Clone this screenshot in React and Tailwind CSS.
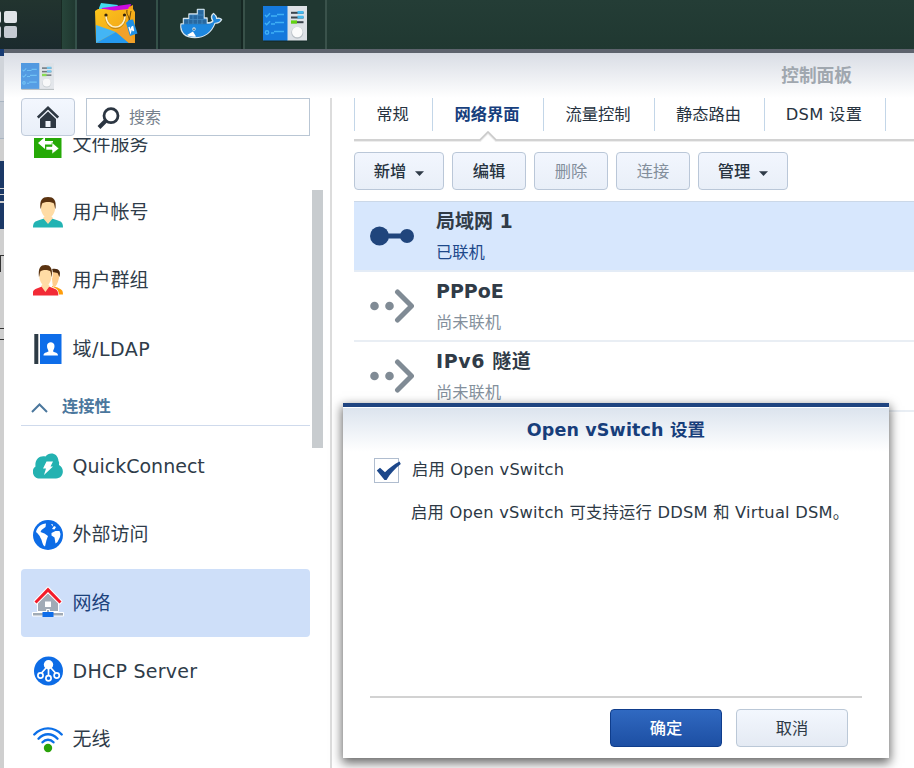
import React from 'react';

function ControlPanelIcon({ className }) {
  return (
    <svg className={className} viewBox="0 0 44 36">
      <rect x="0.5" y="1.5" width="43.5" height="34.5" fill="#0c1f22" opacity=".35" />
      <rect x="0" y="0" width="25" height="34.5" fill="#1579dc" />
      <rect x="24.5" y="0" width="19.5" height="34.5" fill="#dde1e6" />
      <g fill="none" stroke="#3fb0f5" strokeWidth="1.4">
        <path d="M2 9l1.700 1.800L7 7.200M2 17l1.700 1.800L7 15.200" />
        <circle cx="4" cy="26.500" r="1.700" />
        <path d="M8 10h6M14 8.500h7M8 18h4M12 16.500h9M8 27h3M11 25.500h10" strokeWidth="1.600" />
      </g>
      <rect x="28" y="5.800" width="12.500" height="2" fill="#3b444c" />
      <rect x="34.500" y="5" width="6" height="2.800" fill="#42b9f0" />
      <rect x="28" y="10.500" width="12.500" height="2" fill="#3b444c" />
      <rect x="34.500" y="9.700" width="6" height="2.800" fill="#42b9f0" />
      <rect x="28" y="15.200" width="12.500" height="2" fill="#3b444c" />
      <rect x="28" y="14.400" width="6" height="3.200" fill="#62d411" />
      <circle cx="34.300" cy="26.800" r="6" fill="#b9c0c6" />
      <circle cx="34.300" cy="26" r="5.300" fill="#fbfbfb" />
    </svg>
  );
}

function PackageIcon() {
  return (
    <svg className="h-[42px] w-[44px] shrink-0" viewBox="0 0 44 42">
      <defs>
        <linearGradient id="bag" x1="0" y1="0" x2="1" y2="1">
          <stop offset="0" stopColor="#fcc51c" />
          <stop offset="1" stopColor="#f09a17" />
        </linearGradient>
      </defs>
      <path d="M4 5L6 0l17 2-3 6H4z" fill="#41dcee" />
      <path d="M7 5l29-4-2 8H6z" fill="#cb0be0" />
      <path d="M34 4l4-2v6h-6z" fill="#f3a21c" />
      <path d="M0 8l3-2h6l10 1.500L34 6h4l2 3v31H1z" fill="url(#bag)" />
      <path d="M1 22l20 7L1 40z" fill="#43b5f5" />
      <path d="M1 40l20-11 13 11z" fill="#259af0" />
      <path d="M21 29l10-7 9 18h-6z" fill="#f2a12b" />
      <path d="M11 12c0 17 19 17 19 0" fill="none" stroke="#c78912" strokeWidth="2.600" />
      <path d="M11 12c0 16 19 16 19 0" fill="none" stroke="#fff0c4" strokeWidth="1.700" />
      <circle cx="11" cy="12" r="1.600" fill="#33240c" />
      <circle cx="29.500" cy="12" r="1.600" fill="#33240c" />
      <path d="M32 7c-1 6 3 5 2 12M36 8l-2 11" fill="none" stroke="#6b4508" strokeWidth="1" />
      <path d="M31 20l3-3 4-.5 4.500 14L35 33z" fill="#1e90e6" />
      <path d="M34 24l1.500 5 1-4 2 3-1-5" fill="none" stroke="#fff" strokeWidth="1.400" />
    </svg>
  );
}

function DockerIcon() {
  return (
    <svg className="h-[34px] w-[44px] shrink-0" viewBox="0 0 44 34">
      <path
        d="M2 18h2.500v-5.500H10V8h8.500V3.500H25V12h3v5c3 0 5-.7 6-2-2-3-1.500-6 .5-7.500 2 1.500 3 3.300 3 5 2-.6 4-.2 5 1-1.500 2.500-3.500 3.500-6.500 3.500C32 27 26 31.500 16 31.500 6 31.500 1 26.500 2 18z"
        fill="#1977c9"
        stroke="#d5e4ec"
        strokeWidth="1.500"
        strokeLinejoin="round"
      />
      <g fill="#28689f" stroke="#4a93c9" strokeWidth=".4">
        <path d="M5 13.500h4.500V18H5zM9.500 13.500H14V18H9.500zM14 13.500h4.500V18H14zM18.500 13.500H23V18h-4.500zM23 13.500h4.500V18H23zM10.500 9H14v4.500h-3.500zM14 9h4.500v4.500H14zM18.500 9h6v4.500h-6zM19 4h5.500v5H19z" />
      </g>
      <path d="M2.500 18.500H28c4 0 6-1 7-3.500-2-3-1-5.500-.5-6.500 2 1.500 2.500 3.500 2.500 5 2-.6 3.500-.3 4.500.5-1 2-3 2.700-6 2.700C32 26.500 26 31 16 31 7 31 2 26 2.500 18.500z" fill="#1d87de" />
      <path d="M8 29l6-3.500 3 5c-3 .5-7 0-9-1.500z" fill="#fff" />
      <circle cx="15" cy="23" r="1.700" fill="#dce8ef" />
      <circle cx="15" cy="23.200" r=".8" fill="#23475f" />
    </svg>
  );
}

function FileServiceIcon() {
  return (
    <svg className="h-[30px] w-[30px]" viewBox="0 0 30 30">
      <rect x="1" y="1" width="27.500" height="28" fill="#25a906" />
      <path d="M5 14l7-6v4h8v3.500h-8V20z" fill="#fff" />
      <path d="M26 19.500l-7-6v4h-6v3.500h6V25z" fill="#fff" stroke="#25a906" strokeWidth=".6" />
    </svg>
  );
}

function Person({ shirt }) {
  return (
    <g>
      <path d="M0 30.500c0-5 2-6 5-7l6-2h8l6 2c3 1 5 2 5 7z" fill={shirt} />
      <path d="M10 21l5 6 5-6-2-2v-4h-6v4z" fill="#ffdca5" />
      <path d="M8 6c0-4 14-4 14 0v6c0 4-3.500 9-7 9s-7-5-7-9z" fill="#ffdca5" />
      <path d="M7.500 12C6.500 3 9 0 15 0s8.500 3 7.500 12c-1-1-.5-4-2-6-3-1.500-8-1.500-11 0-1.500 2-1 5-2 6z" fill="#5b3310" />
    </g>
  );
}

function UserIcon() {
  return (
    <svg className="h-[31px] w-[30px]" viewBox="0 0 30 31">
      <Person shirt="#22b3b3" />
    </svg>
  );
}

function GroupIcon() {
  return (
    <svg className="h-[31px] w-[30px]" viewBox="0 0 30 31">
      <path d="M20 29.500h10c0-5-2-5-5.500-7L19 21z" fill="#ff9d0a" />
      <path d="M18 5c8-1 9 2 8 8-1 5-3 9-6 10z" fill="#ffcd8c" />
      <path d="M19 4c7-1 9 2 7.500 8-1-1-1-3-2-4l-5-1z" fill="#4d2b10" />
      <g transform="translate(-.5 0) scale(.86 1)">
        <g stroke="#fff" strokeWidth="1.500" paintOrder="stroke">
          <path d="M0 30.500c0-5 2-6 5-7l6-2V12C7 3 9 0 15 0s8.500 3 7.500 12l-3.500 9.500 6 2c3 1 5 2 5 7z" fill="#fff" />
        </g>
        <Person shirt="#f22a36" />
      </g>
    </svg>
  );
}

function DomainIcon() {
  return (
    <svg className="h-[30px] w-[30px]" viewBox="0 0 30 30">
      <rect x="1.300" y="0" width="4" height="30" fill="#2d3b45" />
      <rect x="7" y="0" width="21.500" height="30" fill="#0e6de9" />
      <path d="M14 12c0-5 7.500-5 7.500 0 0 3-1.500 4-1.500 5.500 2 1 5 1 5 4H10.500c0-3 3-3 5-4 0-1.500-1.500-2.500-1.500-5.500z" fill="#fff" />
    </svg>
  );
}

function QuickConnectIcon() {
  return (
    <svg className="h-[26px] w-[30px]" viewBox="0 0 30 26">
      <path d="M7 25.500c-8 0-9-9.500-4.500-12C1.500 6 7 2 12.500 3.500 16-1.500 25-.5 25.500 8c1 1 .5 3 .5 4 6 3 5 13.500-3 13.500z" fill="#24b2b1" />
      <path d="M13.500 8.500H20l-2.500 5h2.500L11 22l2-6.500h-3z" fill="#fff" />
    </svg>
  );
}

function GlobeIcon() {
  return (
    <svg className="h-[30px] w-[30px]" viewBox="0 0 30 30">
      <circle cx="15" cy="15" r="15" fill="#0d6ce6" />
      <path d="M3 12C4 7 8 4 13 3.500l-.5 3.500-4 3-1 2 4 1.500 3.500 2.500-1.500 4-1.500 6.500c-3-1.500-2.500-6-4.500-8.500C6.500 15 5 14 3 12z" fill="#fff" />
      <path d="M18 4l2 .5-.5 2zM21 6l2 1-1.500 2.500L19 9zM18.500 13l4-2h4l1 3-.5 3-2.500 5-2 1.500-1-6-3-2z" fill="#fff" />
    </svg>
  );
}

function NetworkIcon() {
  return (
    <svg className="h-[33px] w-[32px]" viewBox="0 0 32 33">
      <g stroke="#fff" strokeWidth="2" paintOrder="stroke" strokeLinejoin="round">
        <path d="M6 15L16 6l10 9v10H6z" fill="#a1abb6" />
        <path d="M2.500 15.500L16 1.500l13.500 14-2 2L16 6 4.500 17.500z" fill="#f31b29" />
        <path d="M15 24h2v3h14v2.500H1V27h14z" fill="#a1abb6" />
      </g>
      <rect x="10.500" y="26" width="11" height="5" fill="#0e6de9" />
      <rect x="13" y="15.500" width="6" height="5.500" fill="#fff" />
    </svg>
  );
}

function DhcpIcon() {
  return (
    <svg className="h-[30px] w-[30px]" viewBox="0 0 30 30">
      <circle cx="15.500" cy="15" r="14.500" fill="#0d6ce6" />
      <g fill="none" stroke="#fff" strokeWidth="1.700">
        <path d="M15.500 12v7M13 12l-4.500 5M18 12l4.500 5" />
        <circle cx="7.500" cy="19.500" r="2.600" />
        <circle cx="15.500" cy="22.200" r="2.600" />
        <circle cx="23.700" cy="19.500" r="2.600" />
      </g>
      <circle cx="15.500" cy="8.700" r="4.700" fill="#fff" />
    </svg>
  );
}

function WifiIcon() {
  return (
    <svg className="h-[26px] w-[30px]" viewBox="0 0 30 26">
      <g fill="none" stroke="#0b6fe8" strokeWidth="2.400" strokeLinecap="round">
        <path d="M1.300 7.500C9 -.7 21 -.7 28.700 7.500" />
        <path d="M5.500 11.700c5.500-6 13.500-6 19 0" />
        <path d="M9.500 15.300c3.200-3.400 7.800-3.400 11 0" />
      </g>
      <circle cx="15" cy="21" r="4.200" fill="#2aa20a" />
    </svg>
  );
}

function SideItem({ icon, label, active, tracking = '' }) {
  return (
    <div
      className={`flex h-[68.300px] shrink-0 items-center rounded-[4px] pl-[11px] text-[19px] ${
        active ? 'bg-[#cedff9] text-[#1c427c]' : 'text-[#2f3c49]'
      }`}
    >
      <span className="flex w-[32px] shrink-0 items-center justify-center">{icon}</span>
      <span className={`ml-[8.500px] whitespace-nowrap ${tracking}`}>{label}</span>
    </div>
  );
}

function Caret() {
  return (
    <svg className="ml-[9px] mt-[2px] h-[5px] w-[9px]" viewBox="0 0 9 5">
      <path d="M0 .3h9L4.500 5z" fill="#2e3a47" />
    </svg>
  );
}

function ToolButton({ label, width, caret, disabled }) {
  return (
    <button
      className={`flex h-[38px] items-center justify-center rounded-[4px] border-[1.500px] border-[#bac7d8] bg-linear-to-b from-[#f2f6fe] to-[#e9eff8] pt-[2px] text-[16.300px] ${width} ${
        disabled ? 'text-[#828e9b]' : 'font-medium text-[#27333f]'
      }`}
    >
      {label}
      {caret && <Caret />}
    </button>
  );
}

function Tab({ label, width, active }) {
  return (
    <div
      className={`flex h-[33px] shrink-0 items-center justify-center border-l border-[#c3d6e8] pt-[2px] pr-[2px] text-[16.300px] ${width} ${
        active ? 'font-bold text-[#173f7d]' : 'text-[#27333f]'
      }`}
    >
      {label}
    </div>
  );
}

function LinkedIcon() {
  return (
    <svg className="h-[34px] w-[44px]" viewBox="0 0 44 34">
      <circle cx="9.500" cy="17" r="9.500" fill="#20457c" />
      <circle cx="37" cy="17" r="7" fill="#20457c" />
      <rect x="10" y="14.500" width="26" height="5" fill="#20457c" />
    </svg>
  );
}

function UnlinkedIcon() {
  return (
    <svg className="h-[34px] w-[44px]" viewBox="0 0 44 34">
      <circle cx="4.500" cy="17" r="4.300" fill="#808b95" />
      <circle cx="19.500" cy="17" r="4.300" fill="#808b95" />
      <path d="M27.500 3L41.500 17l-14 14" fill="none" stroke="#808b95" strokeWidth="5" strokeLinecap="round" strokeLinejoin="round" />
    </svg>
  );
}

function InterfaceRow({ title, status, linked, tracking = '' }) {
  return (
    <div
      className={`flex h-[70px] items-center border-b-2 pl-[16px] ${
        linked ? 'border-[#e4ecf6] bg-[#d7e7fd]' : 'border-[#e9eef4]'
      }`}
    >
      {linked ? <LinkedIcon /> : <UnlinkedIcon />}
      <div className="ml-[22px] flex flex-col pt-px">
        <span className={`h-[31px] text-[19px] leading-[31px] font-bold text-[#303b47] ${tracking}`}>{title}</span>
        <span className={`h-[31px] text-[16.300px] leading-[31px] ${linked ? 'text-[#1d488a]' : 'text-[#84909c]'}`}>{status}</span>
      </div>
    </div>
  );
}

function Taskbar() {
  return (
    <div className="flex h-[49px] shrink-0 bg-linear-to-b from-[#243d36] to-[#203831]">
      <div className="flex h-full w-[61px] items-center overflow-hidden bg-linear-to-b from-[#22342f] to-[#1b2a2d]">
        <div className="-ml-[12px] grid grid-cols-2 gap-[3px]">
          <span className="h-[12px] w-[13px] rounded-[2px] bg-[#e0e4e8]" />
          <span className="h-[12px] w-[13px] rounded-[2px] bg-[#e0e4e8]" />
          <span className="h-[12px] w-[13px] rounded-[2px] bg-[#c5cad2]" />
          <span className="h-[12px] w-[13px] rounded-[2px] bg-[#c5cad2]" />
        </div>
      </div>
      <div className="w-[14px] border-l border-[#182923] bg-linear-to-r from-[#27453a] to-[#203830]" />
      <div className="flex w-[83px] items-start justify-center border-x-2 border-[#345049] bg-[#1b2a2b] pt-[3px]">
        <PackageIcon />
      </div>
      <div className="flex w-[85px] items-start justify-center border-x-2 border-l-[#17292a] border-r-[#152622] bg-[#203731] pt-[6px]">
        <DockerIcon />
      </div>
      <div className="flex w-[84px] items-start justify-center border-x-2 border-l-[#385149] border-r-[#3a524b] bg-[#203731] pt-[6px]">
        <ControlPanelIcon className="h-[36px] w-[44px]" />
      </div>
    </div>
  );
}

function BackgroundStrip() {
  return (
    <div className="flex w-[4px] shrink-0 flex-col overflow-hidden bg-[#cfcfcf]">
      <div className="h-[7px] bg-[#173b73]" />
      <div className="h-[46px] border-b border-[#a9b5c2] bg-[#d0d4da]" />
      <div className="h-[37px] border-b border-[#a9b5c2] bg-[#c4cad2]" />
      <div className="h-[22px]" />
      <div className="h-[27px] bg-[#1b3866]" />
      <div className="my-px h-[5px] bg-[#1b3866]" />
      <div className="h-[6px] bg-[#1b3866]" />
      <div className="mt-[2px] h-[26px] bg-[#1b3866]" />
      <div className="mt-[26px] h-[17px] border-t border-l border-[#333]" />
      <div className="mt-[56px] h-[12px] border-y border-[#333]" />
    </div>
  );
}

function Sidebar() {
  return (
    <aside className="flex w-[328px] shrink-0 flex-col border-r-2 border-[#dcdcdc] bg-white">
      <div className="flex h-[40px] shrink-0 gap-[11px] pl-[17px]">
        <button className="flex h-[38px] w-[54px] items-center justify-center rounded-[4px] border-[1.500px] border-[#c0cbda] bg-linear-to-b from-[#f3f7fe] to-[#e9eff8]">
          <svg className="h-[22px] w-[22px]" viewBox="0 0 22 22">
            <path d="M.8 11.500L11 1.800l10.200 9.700" fill="none" stroke="#2e3843" strokeWidth="2.600" />
            <path d="M3 13l8-7.500L19 13v9H3z" fill="#2e3843" />
            <path d="M8.500 15h5v6h-5z" fill="#f0f4fb" />
          </svg>
        </button>
        <div className="flex h-[38px] w-[224px] items-center border-[1.500px] border-[#b9c6d4] bg-white pt-px pl-[10px] text-[16px] text-[#75808c]">
          <svg className="h-[22px] w-[23px]" viewBox="0 0 23 22">
            <circle cx="14" cy="8.700" r="7" fill="none" stroke="#2b3541" strokeWidth="2.800" />
            <path d="M9 13.500l-7 7" stroke="#2b3541" strokeWidth="4" />
          </svg>
          <span className="ml-[9px]">搜索</span>
        </div>
      </div>
      <div className="flex min-h-0 flex-1 overflow-hidden">
        <nav className="ml-[17px] flex w-[289px] shrink-0 flex-col overflow-hidden">
          <div className="-mt-[28px] flex shrink-0 flex-col">
            <SideItem icon={<FileServiceIcon />} label="文件服务" />
            <SideItem icon={<UserIcon />} label="用户帐号" />
            <SideItem icon={<GroupIcon />} label="用户群组" />
            <SideItem icon={<DomainIcon />} label="域/LDAP" tracking="tracking-[0.500px]" />
          </div>
          <div className="mb-[6px] flex h-[43px] shrink-0 items-center border-b border-[#cfdaec] pt-[7px] pl-[10px] text-[16.300px] font-bold text-[#4b779d]">
            <svg className="mr-[14px] h-[10px] w-[17px]" viewBox="0 0 17 10">
              <path d="M1 9l7.500-7.500L16 9" fill="none" stroke="#4b779d" strokeWidth="2" />
            </svg>
            连接性
          </div>
          <SideItem icon={<QuickConnectIcon />} label="QuickConnect" />
          <SideItem icon={<GlobeIcon />} label="外部访问" />
          <SideItem icon={<NetworkIcon />} label="网络" active />
          <SideItem icon={<DhcpIcon />} label="DHCP Server" tracking="tracking-[0.250px]" />
          <SideItem icon={<WifiIcon />} label="无线" />
        </nav>
        <div className="mt-[52px] ml-[2px] h-[258px] w-[11px] bg-[#c8cccf]" />
      </div>
    </aside>
  );
}

function MainPanel() {
  return (
    <main className="flex min-w-0 flex-1 flex-col bg-white pl-[22px]">
      <div className="flex shrink-0">
        <Tab label="常规" width="w-[78px]" />
        <Tab label="网络界面" width="w-[111px]" active />
        <Tab label="流量控制" width="w-[111px]" />
        <Tab label="静态路由" width="w-[110px]" />
        <Tab label={<span className="tracking-[0.300px]">DSM 设置</span>} width="w-[121px]" />
        <div className="h-[33px] w-px bg-[#c3d6e8]" />
      </div>
      <svg className="h-[12px] w-[560px] shrink-0" viewBox="0 0 560 12">
        <path d="M0 9.500h126l8-8 8 8h418" fill="none" stroke="#ededed" strokeWidth="3" />
        <path d="M0 9h126l8-8 8 8h418" fill="none" stroke="#c9c9c9" strokeWidth="1.500" />
      </svg>
      <div className="mt-[9px] flex shrink-0 gap-[8px]">
        <ToolButton label="新增" width="w-[90px]" caret />
        <ToolButton label="编辑" width="w-[74px]" />
        <ToolButton label="删除" width="w-[74px]" disabled />
        <ToolButton label="连接" width="w-[74px]" disabled />
        <ToolButton label="管理" width="w-[90px]" caret />
      </div>
      <div className="mt-[11px] flex flex-col border-t border-[#cbd8e8]">
        <InterfaceRow title="局域网 1" status="已联机" linked />
        <InterfaceRow title="PPPoE" status="尚未联机" />
        <InterfaceRow title="IPv6 隧道" status="尚未联机" tracking="tracking-[0.600px]" />
      </div>
    </main>
  );
}

function VSwitchDialog() {
  return (
    <section className="absolute top-[403px] left-[343px] flex h-[355px] w-[546px] flex-col border-t-4 border-[#1f4480] bg-white shadow-[0_4px_10px_1px_rgba(0,0,0,0.6)]">
      <header className="flex h-[45px] shrink-0 items-center justify-center border-t border-white bg-linear-to-b from-[#dce4ee] to-white pt-px text-[17.500px] font-bold tracking-[0.150px] text-[#173e7b]">
        <span>Open vSwitch 设置</span>
      </header>
      <div className="flex flex-1 flex-col pl-[31px] text-[16.300px] text-[#2d3945]">
        <label className="mt-[6px] flex h-[25px] items-center">
          <span className="flex h-[25px] w-[25px] items-center justify-center border-[1.500px] border-[#b0bdcf] bg-white">
            <svg className="-mr-[4px] h-[20px] w-[25px] shrink-0" viewBox="0 0 25 20">
              <path d="M.8 9.500l3.200-2.800 5 4.500C13 7.500 18 3 23.500 .5l1.300 2.500C19 7.500 14 13 10.500 19H8.500z" fill="#1c478a" />
            </svg>
          </span>
          <span className="ml-[13px] tracking-[0.150px] whitespace-nowrap">启用 Open vSwitch</span>
        </label>
        <p className="mt-[18px] ml-[37px] tracking-[0.220px] whitespace-nowrap">启用 Open vSwitch 可支持运行 DDSM 和 Virtual DSM。</p>
      </div>
      <footer className="mx-[27px] flex h-[62px] shrink-0 justify-end gap-[14px] border-t-2 border-[#d2d2d2] pt-[11px] pr-[14px] text-[16.300px]">
        <button className="h-[38px] w-[112px] rounded-[4px] border-[1.500px] border-[#0f3d8c] bg-linear-to-b from-[#3069c1] to-[#1d4fa3] pt-[3px] font-medium text-white">
          确定
        </button>
        <button className="h-[38px] w-[112px] rounded-[4px] border-[1.500px] border-[#bbc8d7] bg-linear-to-b from-[#f3f7fe] to-[#e4eaf3] pt-[3px] text-[#2d3945]">
          取消
        </button>
      </footer>
    </section>
  );
}

export default function App() {
  return (
    <div className="relative flex h-[768px] w-[914px] flex-col overflow-hidden bg-white font-['DejaVu_Sans','Noto_Sans_CJK_SC',sans-serif]">
      <Taskbar />
      <div className="flex min-h-0 flex-1">
        <BackgroundStrip />
        <div className="flex min-w-0 flex-1 flex-col border-t-4 border-[#5d636d] bg-white">
          <header className="flex h-[45px] shrink-0 items-center justify-between bg-linear-to-b from-[#d9dde5] to-white pt-px pr-[62px] pl-[17px] text-[17.700px] font-bold text-[#a0a7af]">
            <ControlPanelIcon className="h-[27px] w-[33px] opacity-70" />
            <span>控制面板</span>
          </header>
          <div className="flex min-h-0 flex-1">
            <Sidebar />
            <MainPanel />
          </div>
        </div>
      </div>
      <VSwitchDialog />
    </div>
  );
}
